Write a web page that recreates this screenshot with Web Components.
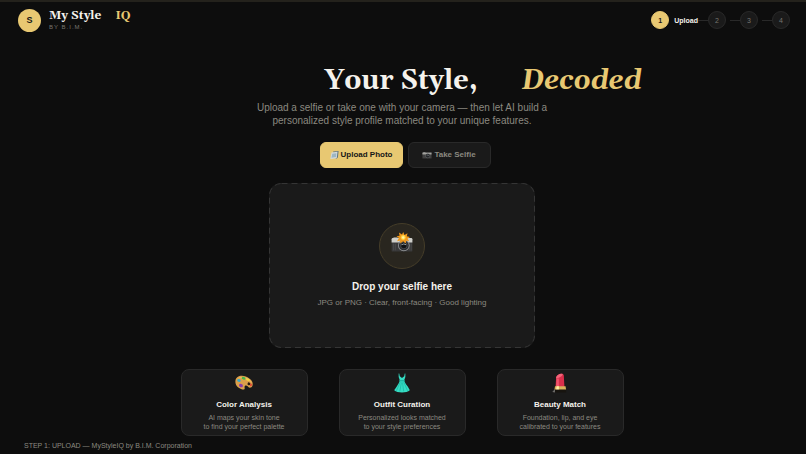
<!DOCTYPE html>
<html lang="en">
<head>
<meta charset="utf-8">
<title>My Style IQ</title>
<style>
:root{--bg:#0d0d0d;--card:#1a1a1a;--line:#292929;--gold:#e8c872;--text:#f5f2ec;--muted:#8b8980;--serif:Georgia,Gelasio,"Liberation Serif",serif}
body{margin:0;background:var(--bg);color:var(--text);font-family:"Liberation Sans",Arial,sans-serif}
</style>
</head>
<body>
<style-app></style-app>
<script>
const define=(name,html,init)=>customElements.define(name,class extends HTMLElement{
  constructor(){
    super();
    const t=document.createElement('template');
    t.innerHTML='<style>*{box-sizing:border-box}h1,h2,p,ol{margin:0;padding:0}svg{display:block}</style>'+html;
    this.attachShadow({mode:'open'}).append(t.content.cloneNode(true));
  }
  connectedCallback(){if(init)init(this)}
});

const icons={
palette:'<svg viewBox="0 0 36 36" width="20" height="20"><g transform="rotate(16 18 18)"><path d="M18 6C8 5 1 11 2 18c1 8 8 12 16 12 4 0 5-2 3-5-1-3 2-5 5-3 3 3 8 1 8-4C34 11 27 7 18 6z" fill="#dca04b"/><path d="M5 13C11 6 26 5 32 15c-7-6-18-6-27-2z" fill="#efbd62"/><circle cx="27" cy="17" r="2.6" fill="#2b1a10"/><ellipse cx="8" cy="16" rx="3.2" ry="2.6" fill="#35a9c9"/><ellipse cx="15" cy="10" rx="3.6" ry="2.4" fill="#48b548"/><ellipse cx="23" cy="10.500" rx="3" ry="2" fill="#f5d43c"/><ellipse cx="14" cy="24" rx="3.600" ry="3" fill="#8c3ba8"/><ellipse cx="31" cy="18" rx="1.800" ry="2.500" fill="#df4636"/></g></svg>',
dress:'<svg viewBox="0 0 36 36" width="20" height="20"><path d="M12 1v6l2 6c0 3-3 7-6 12-2 3-3 4-4 6 3 3 8 4 14 4s11-1 14-4c-1-2-2-4-4-7-3-4-6-8-6-11l2-6V1h-1l-1 5-4 3-4-3-1-5z" fill="#35dcc3"/><path d="M13 15h10v-2H13z" fill="#18a895"/><path d="M15 16 8 32M17 17l-3 16M19 17l2 16M21 16l7 16" stroke="#1bb5a1" stroke-width="1.300" fill="none"/></svg>',
lipstick:'<svg viewBox="0 0 36 36" width="20" height="20"><path d="M11 8c1-4 7-8 12-6 2 1 2 3 2 5l1 18H10z" fill="#d92f4b"/><path d="M11 8c1-4 7-8 12-6-1 5-5 6-12 8z" fill="#f36479"/><path d="M12 10h4v15h-5z" fill="#f0556c"/><path d="M9 24h19l1 6H8z" fill="#d8b25c"/><path d="M12 24h4v6h-5z" fill="#fff0a8"/><path d="M8 30h21v5H8z" fill="#17140f"/><path d="m4 34 5-5v6z" fill="#6b6a68"/></svg>',
photo:'<svg viewBox="0 0 24 24" width="9" height="9"><path d="M8 1 23 0l-2 17-5 4z" fill="#5e747e"/><path d="m4 4 16-2-2 17-17 2z" fill="#d3dadb"/><path d="m6 7 11-1-1 10-12 2z" fill="#9db6c2"/></svg>',
camera:'<svg viewBox="0 0 36 30" width="10" height="8"><path d="M4 4h8v4H4z" fill="#aaa"/><rect x="1" y="6" width="34" height="22" fill="#414141"/><path d="M1 6h34v7H1z" fill="#a3a39f"/><circle cx="21" cy="18" r="9" fill="#6b6d6e"/><circle cx="21" cy="18" r="7.500" fill="#242629"/><path d="M17 17q4-4 8 0" stroke="#a2aaad" stroke-width="2" fill="none"/></svg>',
flash:'<svg viewBox="0 0 36 36" width="22" height="22"><path d="M4 9h7v4H4z" fill="#d7d7d4"/><rect x="1" y="11" width="34" height="21" rx="1.500" fill="#39393a"/><path d="M1 12q0-2 2-2h30q2 0 2 2v5H1z" fill="#cfcfca"/><path d="M4 19v11m3-11v11m23-11v11m3-11v11" stroke="#555"/><circle cx="21" cy="22" r="9.500" fill="#8f9193"/><circle cx="21" cy="22" r="8" fill="#292b2e"/><circle cx="21" cy="22" r="5.500" fill="#101214" stroke="#606367"/><path d="M17 21q4-3 8 0" stroke="#a2aaad" stroke-width="1.500" fill="none"/><path d="m20 0 2 5 5-3-1 5 5 1-4 3 3 4-5-1-1 5-4-4-5 4v-5l-5 1 3-5-4-3 5-1-1-5 5 3z" fill="#ee981d"/><circle cx="20" cy="9" r="4" fill="#ffd642"/><circle cx="20" cy="9" r="2" fill="#fff4a8"/></svg>'
};

define('ui-icon','<style>:host{display:inline-block}</style><span></span>',e=>{e.shadowRoot.querySelector('span').innerHTML=icons[e.getAttribute('name')]});

define('brand-mark',`<style>
:host{display:flex;align-items:center;gap:8px}
.logo{width:23px;height:23px;border-radius:50%;background:var(--gold);color:#161616;display:grid;place-items:center;font:bold 9px/1 "Liberation Sans",sans-serif}
.name{display:flex;gap:14px;font:bold 12px/14px var(--serif)}
.name b{color:var(--gold)}
.by{font-size:6px;line-height:7px;letter-spacing:1px;color:#77756f;margin-top:1px}
</style><div class="logo">S</div><div><div class="name"><span>My Style</span><b>IQ</b></div><div class="by">BY B.I.M.</div></div>`);

define('step-list',`<style>
ol{list-style:none;display:flex;align-items:center}
li{display:flex;align-items:center;font-size:7px;line-height:1;color:#77756f}
i{font-style:normal;width:18px;height:18px;border-radius:50%;border:1px solid var(--line);background:var(--card);display:grid;place-items:center}
.on i{background:var(--gold);border-color:var(--gold);color:#161616;font-weight:bold}
.on b{color:var(--text);margin-left:5px}
li+li::before{content:"";width:10px;height:1px;background:var(--line)}
li+li+li::before{margin-left:4px}
</style><ol><li class="on" aria-current="step"><i>1</i><b>Upload</b></li><li><i>2</i></li><li><i>3</i></li><li><i>4</i></li></ol>`);

define('top-bar',`<style>
:host{display:flex;justify-content:space-between;align-items:center;height:38px;padding:0 16px 0 18px;border-top:2px solid #24221c;box-sizing:border-box}
</style><brand-mark></brand-mark><step-list></step-list>`);

define('mode-button',`<style>
:host{display:block}
button{width:83px;height:26px;padding:0;border-radius:6px;border:1px solid var(--line);background:var(--card);color:var(--muted);font:bold 8px/1 "Liberation Sans",sans-serif;display:flex;align-items:center;justify-content:center;gap:2px}
:host([active]) button{background:var(--gold);border-color:var(--gold);color:#161616}
</style><button type="button"><ui-icon></ui-icon><slot></slot></button>`,e=>{
  const i=document.createElement('ui-icon');i.setAttribute('name',e.getAttribute('icon'));e.shadowRoot.querySelector('ui-icon').replaceWith(i);
});

define('drop-zone',`<style>
:host{display:block;width:266px}
button{position:relative;width:100%;height:165px;padding:0;border:0;border-radius:12px;background:var(--card);color:var(--text);font-family:inherit;display:flex;flex-direction:column;align-items:center;justify-content:center}
.dash{position:absolute;inset:0;width:100%;height:100%}
.dash rect{width:calc(100% - 1px);height:calc(100% - 1px)}
.ring{width:46px;height:46px;border-radius:50%;border:1px solid #453d29;background:#29261f;display:grid;place-items:center;padding-bottom:6px}
b{font-size:10px;line-height:12px;margin-top:12px}
small{font-size:8px;line-height:10px;color:var(--muted);margin-top:5px}
</style><button type="button"><svg class="dash" aria-hidden="true"><rect x=".5" y=".5" rx="12" fill="none" stroke="#353535" stroke-dasharray="6 4"/></svg><span class="ring"><ui-icon name="flash"></ui-icon></span><b>Drop your selfie here</b><small>JPG or PNG · Clear, front-facing · Good lighting</small></button>`);

define('feature-card',`<style>
:host{display:flex;flex-direction:column;align-items:center;width:127px;height:67px;padding-top:3px;box-sizing:border-box;border:1px solid var(--line);border-radius:8px;background:var(--card);text-align:center}
.ic{height:20px}
h2{font-size:8px;line-height:10px;margin-top:7px}
p{font-size:7px;line-height:9px;color:var(--muted);margin-top:3px}
</style><div class="ic"></div><h2></h2><p><slot></slot></p>`,e=>{
  e.shadowRoot.querySelector('.ic').innerHTML='<ui-icon name="'+e.getAttribute('icon')+'"></ui-icon>';
  e.shadowRoot.querySelector('h2').textContent=e.getAttribute('heading');
});

define('style-app',`<style>
:host{display:block}
main{display:flex;flex-direction:column;align-items:center;padding:26px 2px 0 0}
h1{font:bold 27px/34px var(--serif);padding-left:162px;display:flex;gap:44px}
h1 em{color:var(--gold)}
.sub{font-size:10px;line-height:13px;color:var(--muted);text-align:center;margin-top:3px}
.modes{display:flex;gap:5px;margin-top:15px;padding-left:6px}
drop-zone{margin-top:15px}
.cards{display:flex;gap:31px;margin-top:21px}
footer{font-size:7px;line-height:8px;color:var(--muted);padding:6px 24px 0}
</style><top-bar></top-bar>
<main><h1><span>Your Style,</span><em>Decoded</em></h1>
<p class="sub">Upload a selfie or take one with your camera — then let AI build a<br>personalized style profile matched to your unique features.</p>
<div class="modes"><mode-button icon="photo" active>Upload Photo</mode-button><mode-button icon="camera">Take Selfie</mode-button></div>
<drop-zone></drop-zone>
<div class="cards"><feature-card icon="palette" heading="Color Analysis">AI maps your skin tone<br>to find your perfect palette</feature-card><feature-card icon="dress" heading="Outfit Curation">Personalized looks matched<br>to your style preferences</feature-card><feature-card icon="lipstick" heading="Beauty Match">Foundation, lip, and eye<br>calibrated to your features</feature-card></div></main>
<footer>STEP 1: UPLOAD — MyStyleIQ by B.I.M. Corporation</footer>`);
</script>
</body>
</html>
